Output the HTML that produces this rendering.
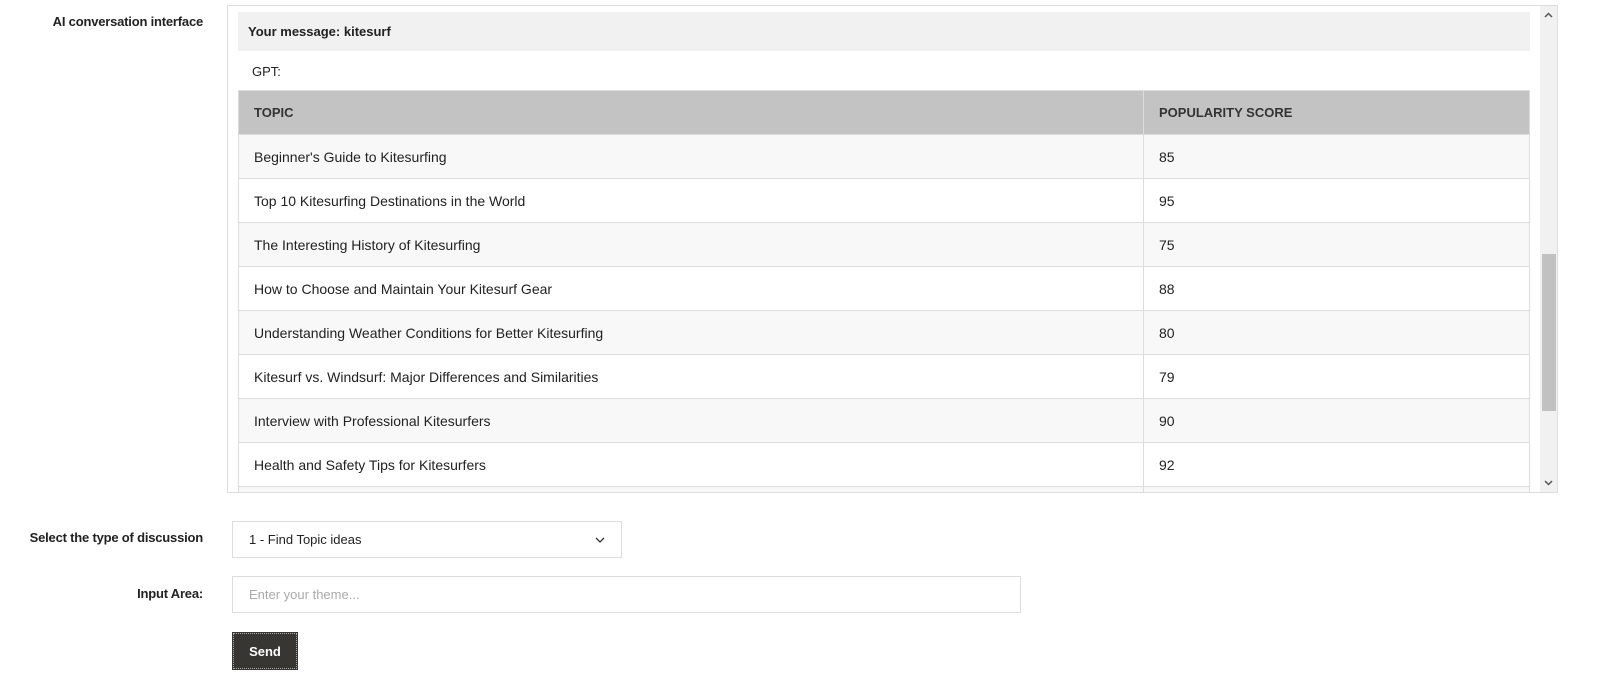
<!DOCTYPE html>
<html><head><meta charset="utf-8"><style>
*{box-sizing:border-box;margin:0;padding:0}
body{width:1607px;height:689px;background:#fff;font-family:"Liberation Sans",Arial,sans-serif;color:#222;position:relative;overflow:hidden}
.lbl{position:absolute;right:1404px;font-size:13px;color:#222;white-space:nowrap;letter-spacing:-0.2px;font-weight:bold}
.box{position:absolute;left:227px;top:5px;width:1331px;height:488px;border:1px solid #ddd;overflow:hidden}
.msg{position:absolute;left:10px;top:6px;width:1292px;height:39px;background:#f1f1f1;font-weight:bold;font-size:13px;padding:12px 10px}
.gpt{position:absolute;left:24px;top:58px;font-size:13px}
table{position:absolute;left:10px;top:84px;width:1292px;border-collapse:collapse;font-size:14px}
td,th{border:1px solid #ddd;height:44px;padding:0 15px;text-align:left}
th{background:#c3c3c3;font-size:13px;font-weight:bold;color:#333}
tr:nth-child(even) td{background:#f8f8f8}
td:first-child,th:first-child{width:905px}
.sb{position:absolute;right:0;top:0;width:17px;height:100%;background:#f1f1f1}
.thumb{position:absolute;left:2px;top:248px;width:14px;height:157px;background:#c1c1c1}
.field{position:absolute;left:232px;border:1px solid #ddd;background:#fff;font-size:13px;padding:0 16px;display:flex;align-items:center}
</style></head><body>
<div class="lbl" style="top:14px">AI conversation interface</div>
<div class="box">
<div class="msg">Your message: kitesurf</div>
<div class="gpt">GPT:</div>
<table>
<tr><th>TOPIC</th><th>POPULARITY SCORE</th></tr>
<tr><td>Beginner's Guide to Kitesurfing</td><td>85</td></tr>
<tr><td>Top 10 Kitesurfing Destinations in the World</td><td>95</td></tr>
<tr><td>The Interesting History of Kitesurfing</td><td>75</td></tr>
<tr><td>How to Choose and Maintain Your Kitesurf Gear</td><td>88</td></tr>
<tr><td>Understanding Weather Conditions for Better Kitesurfing</td><td>80</td></tr>
<tr><td>Kitesurf vs. Windsurf: Major Differences and Similarities</td><td>79</td></tr>
<tr><td>Interview with Professional Kitesurfers</td><td>90</td></tr>
<tr><td>Health and Safety Tips for Kitesurfers</td><td>92</td></tr>
<tr><td>&nbsp;</td><td></td></tr>
</table>
<div class="sb"><div class="thumb"></div>
<svg style="position:absolute;left:4px;top:6px" width="9" height="6"><path d="M1 5L4.5 1.5L8 5" stroke="#555" stroke-width="1.5" fill="none"/></svg>
<svg style="position:absolute;left:4px;top:474px" width="9" height="6"><path d="M1 1L4.5 4.5L8 1" stroke="#555" stroke-width="1.5" fill="none"/></svg>
</div>
</div>
<div class="lbl" style="top:530px">Select the type of discussion</div>
<div class="field" style="top:521px;width:390px;height:37px;justify-content:space-between">1 - Find Topic ideas<svg width="10" height="6"><path d="M1 1L5 5L9 1" stroke="#333" stroke-width="1.3" fill="none"/></svg></div>
<div class="lbl" style="top:586px">Input Area:</div>
<div class="field" style="top:576px;width:789px;height:37px;color:#aaa">Enter your theme...</div>
<div style="position:absolute;left:232px;top:632px;width:66px;height:38px;background:#373632;color:#fff;font-weight:bold;font-size:13px;display:flex;align-items:center;justify-content:center;outline:1px dotted #aaa;outline-offset:-2px">Send</div>
</body></html>
